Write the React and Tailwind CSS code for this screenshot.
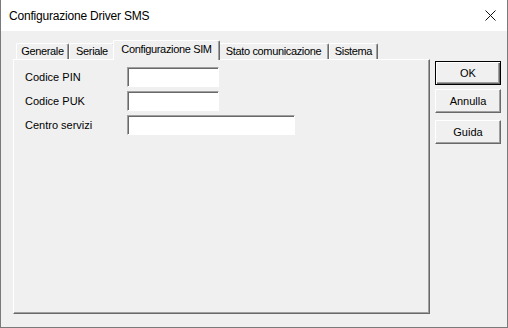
import React, { useState } from "react";

const tabs = ["Generale", "Seriale", "Configurazione SIM", "Stato comunicazione", "Sistema"];
const tabWidths = {
  Generale: "w-[53px]",
  Seriale: "w-[46px]",
  "Configurazione SIM": "w-[107px]",
  "Stato comunicazione": "w-[111px]",
  Sistema: "w-[49px]",
};

const Field = ({ wide }) => (
  <div
    className={`h-[20px] ${wide ? "w-[168px]" : "w-[92px]"} bg-white border border-t-[#a0a0a0] border-l-[#a0a0a0] border-r-white border-b-white shadow-[inset_1px_1px_0_#696969]`}
  />
);

const Button = ({ children, primary, className = "" }) => (
  <button
    className={`w-[66px] h-[24px] flex items-center justify-center text-[11px] text-black bg-[#f0f0f0] ${
      primary
        ? "border border-black shadow-[inset_1px_1px_0_#fff,inset_-1px_-1px_0_#696969,inset_-2px_-2px_0_#a0a0a0]"
        : "border border-t-white border-l-white border-r-[#696969] border-b-[#696969] shadow-[inset_-1px_-1px_0_#a0a0a0]"
    } ${className}`}
  >
    {children}
  </button>
);

export default function App() {
  const [active, setActive] = useState("Configurazione SIM");

  return (
    <div className="w-[508px] h-[328px] flex flex-col bg-[#f0f0f0] border-x border-b border-[#7a7a7a] font-['Liberation_Sans',Arial,sans-serif] text-black select-none">
      {/* Title bar */}
      <div className="h-[31px] bg-white flex items-center justify-between pl-[8px] pr-[10px]">
        <span className="text-[12px] tracking-[-0.2px]">Configurazione Driver SMS</span>
        <svg width="11" height="11" viewBox="0 0 11 11" className="mr-[1px]">
          <path d="M0.5 0.5 L10.5 10.5 M10.5 0.5 L0.5 10.5" stroke="#111" strokeWidth="1" fill="none" />
        </svg>
      </div>

      {/* Body */}
      <div className="flex-1 flex pt-[9px] pl-[12px]">
        <div className="flex flex-col">
          {/* Tabs */}
          <div className="h-[19px] flex items-end pl-[3px]">
            {tabs.map((t) => {
              const sel = t === active;
              return (
                <div
                  key={t}
                  onClick={() => setActive(t)}
                  className={`${tabWidths[t]} flex items-center justify-center text-[11px] tracking-[-0.35px] bg-[#f0f0f0] border border-b-0 border-t-white border-l-white border-r-[#696969] shadow-[inset_-1px_0_0_#a0a0a0] rounded-t-[2px] ${
                    sel ? "relative z-10 h-[20px] -mx-[2px] -mb-px pb-[2px]" : "h-[16px]"
                  }`}
                >
                  {t}
                </div>
              );
            })}
          </div>

          {/* Panel */}
          <div className="w-[417px] h-[255px] border border-t-white border-l-white border-r-[#696969] border-b-[#696969] shadow-[inset_-1px_-1px_0_#a0a0a0] pt-[7px] pl-[11px]">
            <div className="grid grid-cols-[102px_auto] gap-y-[4px] items-center text-[11px]">
              <span>Codice PIN</span>
              <Field />
              <span>Codice PUK</span>
              <Field />
              <span>Centro servizi</span>
              <Field wide />
            </div>
          </div>
        </div>

        {/* Buttons */}
        <div className="flex flex-col ml-[5px] mt-[21px]">
          <Button primary>OK</Button>
          <Button className="mt-[4px]">Annulla</Button>
          <Button className="mt-[7px]">Guida</Button>
        </div>
      </div>
    </div>
  );
}
